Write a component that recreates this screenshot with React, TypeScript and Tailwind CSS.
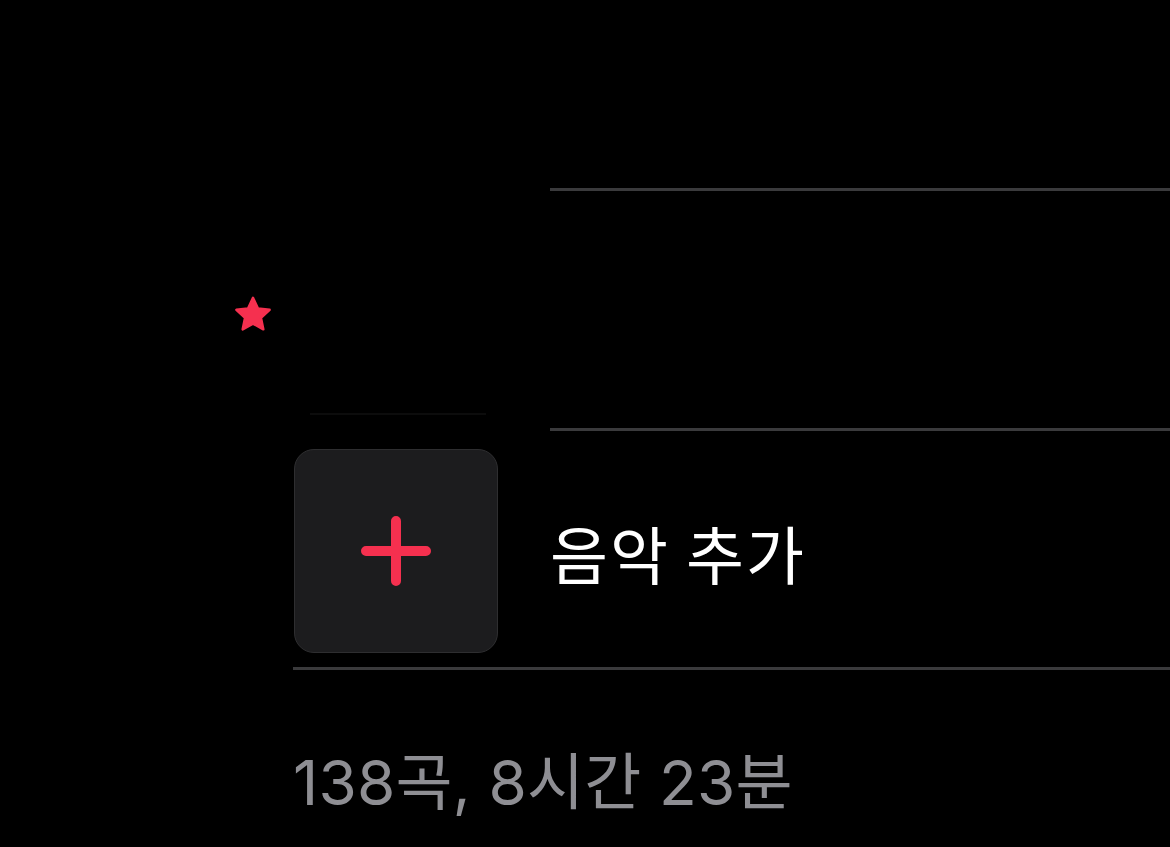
import React from 'react';

const font = { fontFamily: '"Noto Sans CJK KR", "Noto Sans", sans-serif' };

const Star = () => (
  <svg width="42" height="42" viewBox="0 0 24 24" className="block">
    <path
      d="M12 2.2l2.85 6.1 6.65.75-4.95 4.55 1.35 6.6L12 16.9l-5.9 3.3 1.35-6.6L2.5 9.05l6.65-.75z"
      fill="#f5304f"
      stroke="#f5304f"
      strokeWidth="1.4"
      strokeLinejoin="round"
    />
  </svg>
);

const PlusIcon = () => (
  <svg width="72" height="72" viewBox="0 0 72 72" className="block">
    <path d="M36 6v60M6 36h60" stroke="#f5304f" strokeWidth="10" strokeLinecap="round" />
  </svg>
);

export default function App() {
  return (
    <div className="w-full h-[847px] bg-black text-white overflow-hidden" style={font}>
      {/* 위쪽 잘린 행 */}
      <div className="h-[191px] ml-[550px] border-b-[3px] border-[#3a3a3c]" />

      {/* 즐겨찾기 표시가 있는 행 */}
      <div className="flex h-[240px]">
        <div className="w-[294px] flex items-center justify-end pr-[20px] pt-[8px]">
          <Star />
        </div>
        <div className="w-[204px] flex flex-col justify-end pb-[16px]">
          <div className="h-[2px] ml-[16px] mr-[12px] bg-[#0c0c0c]" />
        </div>
        <div className="flex-1 ml-[52px] border-b-[3px] border-[#3a3a3c]" />
      </div>

      {/* 음악 추가 */}
      <div className="ml-[293px] flex items-center pt-[18px] pb-[14px] border-b-[3px] border-[#3a3a3c]">
        <div className="ml-[1px] w-[204px] h-[204px] rounded-[20px] bg-[#1c1c1e] border border-[#2e2e30] flex items-center justify-center">
          <PlusIcon />
        </div>
        <span className="ml-[52px] text-[63px] leading-none text-white tracking-[2px]">음악 추가</span>
      </div>

      {/* 합계 */}
      <div
        className="pl-[293px] pt-[82px] text-[62px] leading-none text-[#8e8e93] tracking-[0.2px]"
        style={{ fontFamily: 'Inter, "Noto Sans CJK KR", sans-serif' }}
      >
        138곡, 8시간 23분
      </div>
    </div>
  );
}
